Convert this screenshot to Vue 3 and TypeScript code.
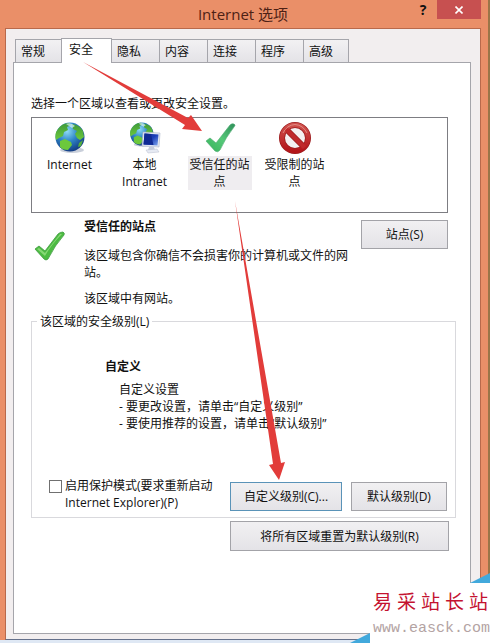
<script setup lang="ts">
import { ref } from 'vue'

interface Zone {
  id: string
  label: string
}

const tabs: string[] = ['常规', '安全', '隐私', '内容', '连接', '程序', '高级']
const activeTab = ref<string>('安全')
const zones: Zone[] = [
  { id: 'internet', label: 'Internet' },
  { id: 'intranet', label: '本地 Intranet' },
  { id: 'trusted', label: '受信任的站点' },
  { id: 'restricted', label: '受限制的站点' },
]
const selectedZone = ref<string>('trusted')
const protectedMode = ref<boolean>(false)
const siteName: string[] = [...'易采站长站']
</script>

<template>
  <main class="window">
    <svg class="defs" width="0" height="0" aria-hidden="true">
      <defs>
        <radialGradient id="sea" cx="0.4" cy="0.3" r="0.7">
          <stop offset="0" stop-color="#8fdcf5" />
          <stop offset="0.5" stop-color="#2f86c8" />
          <stop offset="1" stop-color="#143f86" />
        </radialGradient>
        <linearGradient id="land" x1="0" y1="0" x2="0" y2="1">
          <stop offset="0" stop-color="#3f9a3a" />
          <stop offset="1" stop-color="#6cc83c" />
        </linearGradient>
        <linearGradient id="tick" x1="0" y1="1" x2="1" y2="0">
          <stop offset="0" stop-color="#36b35a" />
          <stop offset="0.5" stop-color="#55c878" />
          <stop offset="1" stop-color="#2f8f5a" />
        </linearGradient>
        <linearGradient id="ban" x1="0" y1="0" x2="0" y2="1">
          <stop offset="0" stop-color="#d0504c" />
          <stop offset="1" stop-color="#b3151a" />
        </linearGradient>
        <linearGradient id="screen" x1="0" y1="0" x2="1" y2="1">
          <stop offset="0" stop-color="#0a2a98" />
          <stop offset="0.5" stop-color="#1c3fb8" />
          <stop offset="1" stop-color="#7fa6ee" />
        </linearGradient>
        <g id="globe">
          <ellipse cx="18" cy="28" rx="12" ry="3" fill="#c9cfda" />
          <circle cx="16" cy="15" r="14.5" fill="url(#sea)" />
          <path d="M4 7Q8 1 15 1L17 3 13 5 14 8 10 10 9 14 5 16 2 18Q0 12 4 7Z" fill="url(#land)" />
          <path d="M18 2Q26 3 29 9L30 15 26 18 23 16 21 12 23 9 19 7Z" fill="url(#land)" />
          <path d="M6 19L11 17 17 20 18 23 14 28Q8 28 6 25Z" fill="#6cc83c" />
          <path d="M25 21L29 18 27 24 24 25Z" fill="#55b03a" />
          <path d="M12 2Q17 0 21 4L18 6 15 4Z" fill="#d8f3fb" opacity="0.7" />
        </g>
      </defs>
    </svg>

    <header class="titlebar">
      <h1>Internet 选项</h1>
      <div class="caption">
        <button class="help" type="button" aria-label="帮助">?</button>
        <button class="close" type="button" aria-label="关闭">
          <svg width="8" height="8" viewBox="0 0 8 8"><path d="M0.5 0.5L7.5 7.5M7.5 0.5L0.5 7.5" stroke="#fff" stroke-width="1.6" /></svg>
        </button>
      </div>
    </header>

    <div class="client">
      <nav class="tabs" role="tablist">
        <button
          v-for="tab in tabs"
          :key="tab"
          type="button"
          role="tab"
          class="tab"
          :class="{ active: tab === activeTab }"
          :aria-selected="tab === activeTab"
          @click="activeTab = tab"
        >{{ tab }}</button>
      </nav>

      <section class="panel">
        <p class="intro">选择一个区域以查看或更改安全设置。</p>
        <div class="zones">
          <button
            v-for="zone in zones"
            :key="zone.id"
            type="button"
            class="zone"
            :class="{ selected: zone.id === selectedZone }"
            @click="selectedZone = zone.id"
          >
            <svg width="32" height="32" viewBox="0 0 32 32" aria-hidden="true">
              <use v-if="zone.id === 'internet'" href="#globe" />
              <template v-else-if="zone.id === 'intranet'">
                <use href="#globe" transform="scale(0.8)" />
                <path d="M14 10L31 11 30 25 13 24Z" fill="#e3e8f4" stroke="#a9b1c6" stroke-width="0.6" />
                <path d="M15.500 11.500L29.500 12.500 28.500 23.500 14.500 22.500Z" fill="url(#screen)" />
                <path d="M15.500 11.500L22 12 24.500 23 14.500 22.500Z" fill="#102a94" />
                <path d="M20 25L25 25 26 28 19 28Z" fill="#c5ccdc" />
                <path d="M17 28L28 27 30 30 19 31Z" fill="#e6eaf3" stroke="#b8bfce" stroke-width="0.5" />
              </template>
              <path v-else-if="zone.id === 'trusted'" d="M2 19L6 16 12 21 26 3Q28 1 30 2Q32 3 30 5Q22 15 16 28Q14 31 11 29Z" fill="url(#tick)" stroke="#4aa86e" stroke-width="0.6" />
              <template v-else>
                <circle cx="16" cy="16" r="13" fill="#f4f1f2" stroke="#9c1c1e" stroke-width="6" />
                <path d="M6.500 6.500L25.500 25.500" stroke="#9c1c1e" stroke-width="6" />
                <circle cx="16" cy="16" r="13" fill="none" stroke="url(#ban)" stroke-width="4.500" />
                <path d="M6.500 6.500L25.500 25.500" stroke="#c02a2c" stroke-width="4.500" />
                <path d="M4 11Q8 3 16 2.500Q24 3 28 11" fill="none" stroke="#e08a84" stroke-width="1" />
              </template>
            </svg>
            <span>{{ zone.label }}</span>
          </button>
        </div>

        <div class="details">
          <svg class="mark" width="32" height="32" viewBox="0 0 32 32" aria-hidden="true">
            <path d="M1 18L5 15 11 20 24 3Q26 1 29 1Q31 2 30 4Q21 14 14 28Q12 30 10 28Z" fill="#4cbb42" stroke="#3f9a40" stroke-width="0.8" />
            <path d="M3 18L11 25Q17 14 28 3L26 3 11 22 5 17Z" fill="#a0e48a" opacity="0.7" />
          </svg>
          <div class="about">
            <h2>受信任的站点</h2>
            <p>该区域包含你确信不会损害你的计算机或文件的网站。</p>
            <p>该区域中有网站。</p>
          </div>
          <button class="btn sites" type="button">站点(S)</button>
        </div>

        <fieldset class="level">
          <legend>该区域的安全级别(L)</legend>
          <h3>自定义</h3>
          <div class="notes">
            <p>自定义设置</p>
            <p>- 要更改设置，请单击“自定义级别”</p>
            <p>- 要使用推荐的设置，请单击“默认级别”</p>
          </div>
          <div class="actions">
            <label class="check">
              <input v-model="protectedMode" type="checkbox" />
              <span>启用保护模式(要求重新启动 Internet Explorer)(P)</span>
            </label>
            <button class="btn custom" type="button">自定义级别(C)...</button>
            <button class="btn default" type="button">默认级别(D)</button>
          </div>
        </fieldset>
        <div class="reset-row">
          <button class="btn reset" type="button">将所有区域重置为默认级别(R)</button>
        </div>
      </section>
    </div>

    <svg class="arrows" width="490" height="643" viewBox="0 0 490 643" aria-hidden="true">
      <path d="M83 62L188 118 191 115 202 131 182 129 185 125Z" fill="#e23c3a" />
      <path d="M235 201L281 463 285 462 279 480 269 465 273 464Z" fill="#e23c3a" />
    </svg>

    <aside class="watermark">
      <svg class="fold top" width="20" height="10" viewBox="0 0 20 10"><path d="M0 10L20 0V10Z" fill="#42a9dc" /></svg>
      <svg class="fold left" width="20" height="10" viewBox="0 0 20 10"><path d="M0 10L20 0V10Z" fill="#42a9dc" /></svg>
      <div class="site"><span v-for="(char, i) in siteName" :key="i">{{ char }}</span></div>
      <div class="url">www.easck.com</div>
    </aside>
  </main>
</template>

<style>
body {
  margin: 0;
}
</style>

<style scoped>
* {
  box-sizing: border-box;
}
h1, h2, h3, p {
  margin: 0;
}
button {
  font: inherit;
  color: inherit;
  padding: 0;
}
.window {
  position: relative;
  display: flex;
  flex-direction: column;
  min-height: 100vh;
  padding: 0 9px 3px 5px;
  overflow: hidden;
  background:
    linear-gradient(to top, #dfe8f4 3px, transparent 3px),
    linear-gradient(to left, #9b7548 2px, #ea8f68 2px);
  color: #111;
  font: 12px/17px "Open Sans", "Noto Sans CJK SC", sans-serif;
}
.defs {
  position: absolute;
}
.titlebar {
  position: relative;
  height: 28px;
}
h1 {
  text-align: center;
  font-size: 15px;
  line-height: 28px;
  font-weight: 400;
  color: #4d2115;
}
.caption {
  position: absolute;
  top: 0;
  right: 0;
  display: flex;
}
.help, .close {
  height: 19px;
  border: 0;
  background: none;
}
.help {
  width: 28px;
  font-weight: 700;
  font-size: 14px;
}
.close {
  width: 44px;
  background: #c75050;
}
.close svg {
  display: block;
  margin: 0 auto;
}
.client {
  flex: 1;
  display: flex;
  flex-direction: column;
  padding: 8px 9px 5px 7px;
  border: 1px solid #b9694b;
  border-bottom-color: #64708a;
  background: #f2eeef;
}
.tabs {
  display: flex;
  align-items: flex-end;
  height: 25px;
  padding-left: 2px;
}
.tab {
  width: 48px;
  height: 23px;
  padding-left: 5px;
  border: 1px solid #a5a5ab;
  border-bottom: 0;
  border-left-width: 0;
  background: linear-gradient(#f2f1f3, #e4e3e7);
  text-align: left;
}
.tab:first-child {
  width: 47px;
  border-left-width: 1px;
}
.tab:last-child {
  width: 45px;
}
.tab.active {
  z-index: 1;
  width: 51px;
  height: 25px;
  margin: 0 0 -1px -1px;
  padding: 0 0 3px 7px;
  border-left-width: 1px;
  background: #fff;
}
.panel {
  flex: 1;
  padding: 32px 14px 16px 17px;
  border: 1px solid #a5a5ab;
  background: #fff;
}
.zones {
  display: grid;
  grid-template-columns: repeat(4, 75px);
  height: 96px;
  margin: 5px 8px 0 0;
  border: 1px solid #7d7d82;
}
.zone {
  display: flex;
  flex-direction: column;
  align-items: center;
  gap: 2px;
  padding-top: 4px;
  border: 0;
  background: none;
}
.zone span {
  width: 64px;
  text-align: center;
}
.zone.selected span {
  background: #efedf0;
}
.details {
  display: flex;
  align-items: flex-start;
  padding: 5px 8px 0 3px;
}
.mark {
  flex: none;
  margin-top: 13px;
}
.about {
  flex: 1;
  display: flex;
  flex-direction: column;
  gap: 9px;
  margin-left: 18px;
}
h2, h3 {
  font-size: 12px;
  line-height: 17px;
  font-weight: 700;
}
h2 {
  margin-bottom: 3px;
}
.btn {
  flex: none;
  height: 29px;
  border: 1px solid #a3a3a8;
  background: linear-gradient(#f1f0f2, #e4e3e7);
}
.sites {
  width: 87px;
  margin-top: 2px;
  margin-left: 8px;
}
.level {
  min-width: 0;
  margin: 6px 0 0;
  padding: 28px 8px 6px 17px;
  border: 1px solid #d9d9dd;
}
legend {
  margin-left: -12px;
  padding: 0 3px;
}
h3 {
  padding-left: 56px;
}
.notes {
  padding: 6px 0 0 70px;
  white-space: nowrap;
}
.actions {
  display: flex;
  align-items: flex-end;
  margin-top: 45px;
}
.check {
  flex: 1;
  display: flex;
  align-items: flex-start;
  gap: 3px;
}
.check span {
  width: 155px;
}
.check input {
  appearance: none;
  flex: none;
  width: 13px;
  height: 13px;
  margin: 3px 0 0;
  border: 1px solid #707070;
  background: #fff;
}
.custom {
  width: 112px;
  margin-right: 9px;
  border-color: #5a93b8;
}
.default {
  width: 96px;
}
.reset-row {
  display: flex;
  justify-content: flex-end;
  padding: 3px 7px 0 0;
}
.reset {
  width: 219px;
  height: 30px;
}
.arrows {
  position: absolute;
  top: 0;
  left: 0;
  z-index: 2;
  pointer-events: none;
}
.watermark {
  position: absolute;
  right: 0;
  bottom: 0;
  z-index: 3;
  width: 120px;
  height: 60px;
  padding: 6px 0 0 3px;
  background: #fff;
}
.fold {
  position: absolute;
}
.fold.top {
  top: -10px;
  right: 0;
}
.fold.left {
  bottom: 0;
  left: -20px;
}
.site {
  display: flex;
  justify-content: space-between;
  padding-right: 2px;
  color: #c41230;
  font: 19px/28px "Liberation Serif", "Noto Sans CJK SC", serif;
}
.url {
  color: #b3a3a3;
  font: 15px/24px "Liberation Mono", monospace;
}
</style>
